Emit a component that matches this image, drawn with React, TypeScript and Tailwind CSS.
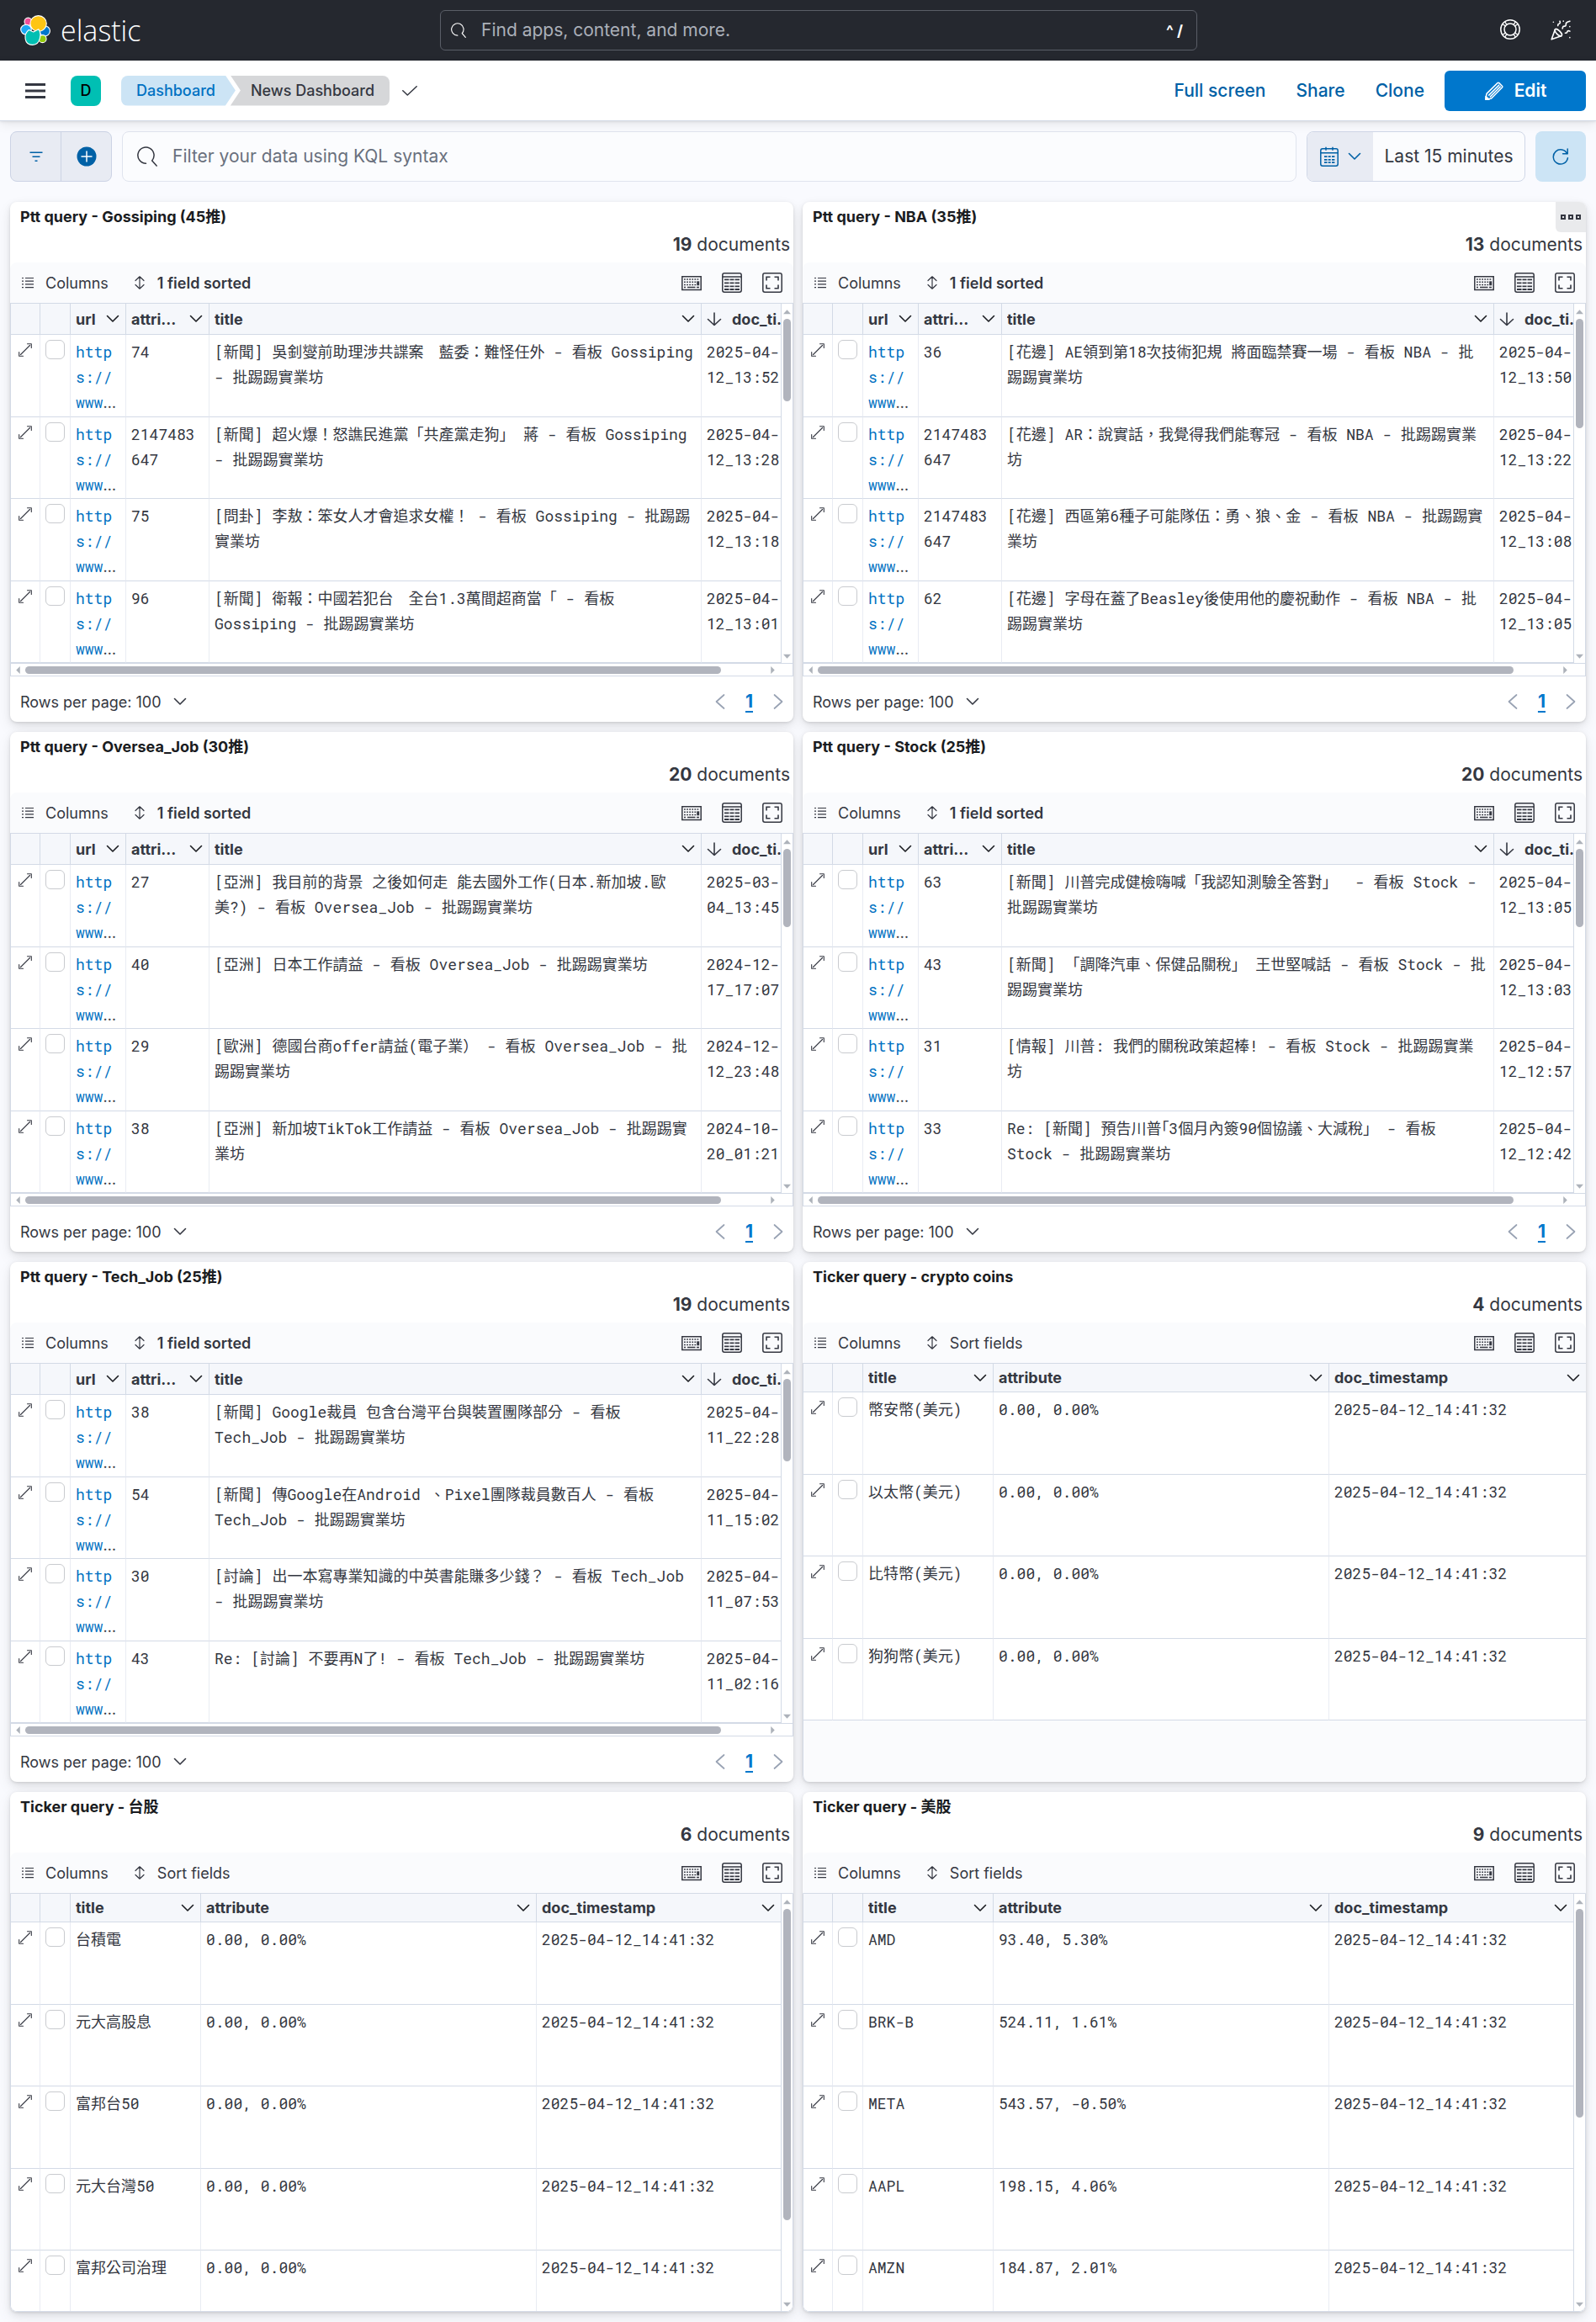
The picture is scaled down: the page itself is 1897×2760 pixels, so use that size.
import React from "react";
import { PartyPopper } from "lucide-react";

type IconProps = { className?: string };

/* ---------- icons ---------- */

const ElasticMark = () => (
  <svg viewBox="0 0 32 32" className="size-9" stroke="#fff" strokeWidth="1" aria-hidden="true">
    <ellipse cx="8.4" cy="6.9" rx="3.9" ry="4.1" fill="#f04e98" />
    <ellipse cx="6.2" cy="15.2" rx="5.6" ry="5.2" fill="#1ba9f5" />
    <ellipse cx="25.9" cy="16.7" rx="5.6" ry="5.4" fill="#0077cc" />
    <ellipse cx="23.6" cy="25" rx="4" ry="4" fill="#93c90e" />
    <ellipse cx="19.2" cy="8.9" rx="8.6" ry="8.4" fill="#fec514" />
    <path d="M9.2 15.6 L14 17.8 L19.3 14.9 C22.6 18.2 22.2 31.4 13 31.4 C4 31.4 3.2 20.2 9.2 15.6 Z" fill="#00bfb3" strokeLinejoin="round" />
  </svg>
);

const SearchIcon = ({ className }: IconProps) => (
  <svg viewBox="0 0 24 24" className={className} fill="none" stroke="currentColor" strokeWidth="1.5" strokeLinecap="round" aria-hidden="true">
    <path d="M10.5 20.2a9.6 9.6 0 1 1 7.2-3.3l5.4 6.2" />
  </svg>
);

const HelpIcon = () => (
  <svg viewBox="0 0 24 24" className="size-6" fill="none" stroke="currentColor" strokeWidth="1.5" aria-hidden="true">
    <circle cx="12" cy="12" r="11.2" />
    <circle cx="12" cy="12" r="7" />
    <path strokeWidth="1.3" d="M3.2 5.8l3.6 2.5M5.8 3.2l2.5 3.6M20.8 5.8l-3.6 2.5M18.2 3.2l-2.5 3.6M3.2 18.2l3.6-2.5M5.8 20.8l2.5-3.6M20.8 18.2l-3.6-2.5M18.2 20.8l-2.5-3.6" />
  </svg>
);

const MenuIcon = () => (
  <svg viewBox="0 0 24 18" className="h-[18px] w-6" fill="currentColor" aria-hidden="true">
    <path d="M0 0h24v3H0zM0 7.5h24v3H0zM0 15h24v3H0z" />
  </svg>
);

const CheckIcon = () => (
  <svg viewBox="0 0 18 12" className="h-3 w-[18px]" fill="none" stroke="currentColor" strokeWidth="1.5" strokeLinecap="round" strokeLinejoin="round" aria-hidden="true">
    <path d="M.8 5.8L6.3 11 17.2 .8" />
  </svg>
);

const PencilIcon = () => (
  <svg viewBox="0 0 24 24" className="size-6" fill="none" stroke="currentColor" strokeWidth="1.5" strokeLinejoin="round" aria-hidden="true">
    <path d="M16 2.6a1.3 1.3 0 0 1 1.8 0l3.6 3.6a1.3 1.3 0 0 1 0 1.8L8.6 21 1.8 22.2 3 15.4z" />
    <path d="M5.2 17.6L18 4.9M7 19.4L19.6 6.6" />
    <path d="M2 18.5v3.7h4z" fill="currentColor" />
  </svg>
);

const FilterIcon = () => (
  <svg viewBox="0 0 16 12" className="h-3 w-4" fill="currentColor" aria-hidden="true">
    <path d="M.5 .5h15v1.5H.5zM3.5 5.5h9V7h-9zM6.5 10.5h3V12h-3z" />
  </svg>
);

const PlusCircleIcon = () => (
  <svg viewBox="0 0 24 24" className="size-6" aria-hidden="true">
    <circle cx="12" cy="12" r="11.5" fill="#0061a6" />
    <path d="M12 6v12M6 12h12" stroke="#fff" strokeWidth="1.5" strokeLinecap="round" />
  </svg>
);

const CalendarIcon = () => (
  <svg viewBox="0 0 24 24" className="size-6" fill="none" stroke="currentColor" strokeWidth="1.5" aria-hidden="true">
    <rect x="1.8" y="2.8" width="20.4" height="20.4" rx="2.2" />
    <path d="M1.8 7.8h20.4M8 .8v4M16 .8v4" />
    <path d="M6 12.2h3.5M10.7 12.2h3M15 12.2h3.4M6 15.8h3.5M10.7 15.8h3M15 15.8h3.4M6 19.2h3.5M10.7 19.2h3M15 19.2h3.4" strokeWidth="1.7" />
  </svg>
);

const ChevronDown = ({ className }: IconProps) => (
  <svg viewBox="0 0 16 10" className={className} fill="none" stroke="currentColor" strokeWidth="1.6" strokeLinecap="round" strokeLinejoin="round" aria-hidden="true">
    <path d="M1.5 1.5L8 8l6.500-6.500" />
  </svg>
);

const RefreshIcon = () => (
  <svg viewBox="0 0 20 20" className="size-5" fill="none" stroke="currentColor" strokeWidth="1.5" strokeLinecap="round" strokeLinejoin="round" aria-hidden="true">
    <path d="M18.2 1v5.800h-5.600M17.800 7A8.600 8.600 0 1 0 18.400 11.800" />
  </svg>
);

const ListIcon = () => (
  <svg viewBox="0 0 18 18" className="size-[18px]" stroke="currentColor" strokeWidth="1.2" aria-hidden="true">
    <path d="M2 3.500h2M6 3.500h10M2 7.200h2M6 7.200h10M2 10.900h2M6 10.900h10M2 14.600h2M6 14.600h10" />
  </svg>
);

const SortIcon = () => (
  <svg viewBox="0 0 18 18" className="size-[18px]" fill="none" stroke="currentColor" strokeWidth="1.200" strokeLinecap="round" strokeLinejoin="round" aria-hidden="true">
    <path d="M9 2v14M4 6.500L9 1.800l5 4.700M4 11.500l5 4.700 5-4.700" />
  </svg>
);

const KeyboardIcon = () => (
  <svg viewBox="0 0 24 24" className="size-6" fill="none" stroke="currentColor" strokeWidth="1.500" aria-hidden="true">
    <path d="M.8 4.800h22.400v15.600H.8z" />
    <path d="M3 8h18.500M3 11.200h14.500M3 14.400h14.500" strokeWidth="1.500" strokeDasharray="1.800 1.300" />
    <path d="M3 17.500h2M7 17.500h9.500M18 17.500h3" strokeWidth="1.500" />
    <path d="M19.700 10.300v5" strokeWidth="3" />
  </svg>
);

const DensityIcon = () => (
  <svg viewBox="0 0 24 24" className="size-6" fill="none" stroke="currentColor" strokeWidth="1.500" aria-hidden="true">
    <rect x=".8" y=".8" width="22.400" height="22.400" rx="2.200" />
    <path d="M.8 5h22.400" />
    <path d="M3 8.300h5.500M9.500 8.300h5M15.500 8.300H21M3 12.300h5.500M9.500 12.300h5M15.500 12.300H21M3 16.300h5.500M9.500 16.300h5M15.500 16.300H21M3 20h5.500M9.500 20h5M15.500 20H21" strokeWidth="1.800" />
  </svg>
);

const FullScreenIcon = () => (
  <svg viewBox="0 0 24 24" className="size-6" fill="none" stroke="currentColor" strokeWidth="1.500" aria-hidden="true">
    <rect x=".8" y=".8" width="22.400" height="22.400" rx="2.200" />
    <path d="M5 9.500V5.200h4.500M14.500 5.200H19v4.300M19 14.500v4.300h-4.500M9.500 18.800H5v-4.300" strokeWidth="1.600" />
  </svg>
);

const ExpandIcon = () => (
  <svg viewBox="0 0 16 16" className="size-4" fill="none" stroke="currentColor" strokeWidth="1.100" strokeLinecap="round" strokeLinejoin="round" aria-hidden="true">
    <path d="M2.500 13.500l11-11M10.500.700h4.800v4.800M.7 10.500v4.800h4.800" />
  </svg>
);

const ArrowDownIcon = () => (
  <svg viewBox="0 0 18 18" className="size-[18px] shrink-0" fill="none" stroke="currentColor" strokeWidth="1.600" strokeLinecap="round" strokeLinejoin="round" aria-hidden="true">
    <path d="M9 2v14.500M1.500 9.500L9 16.500l7.500-7" />
  </svg>
);

const PageArrow = ({ dir }: { dir: "left" | "right" }) => (
  <svg viewBox="0 0 12 20" className="h-5 w-3" fill="none" stroke="currentColor" strokeWidth="1.700" strokeLinecap="round" strokeLinejoin="round" aria-hidden="true">
    <path d={dir === "left" ? "M10.500 2L1.500 10l9 8" : "M1.500 2l9 8-9 8"} />
  </svg>
);

const Triangle = ({ dir }: { dir: "up" | "down" | "left" | "right" }) => {
  const d = {
    up: "M0 7L5 1.500 10 7z",
    down: "M0 3l5 5.500L10 3z",
    left: "M7.500 0L2.500 5l5 5z",
    right: "M2.500 0l5 5-5 5z",
  }[dir];
  return (
    <svg viewBox="0 0 10 10" className="size-[9px] shrink-0" fill="#adb2ba" aria-hidden="true">
      <path d={d} />
    </svg>
  );
};

/* ---------- data ---------- */

type PttRow = [attribute: string, title: string, time: string];
type TickerRow = [title: string, attribute: string];

interface PttData {
  kind: "ptt";
  name: string;
  count: number;
  thumb: string;
  menu?: boolean;
  rows: PttRow[];
}
interface TickerData {
  kind: "ticker";
  name: string;
  count: number;
  thumb?: string;
  menu?: boolean;
  rows: TickerRow[];
}

const panels: (PttData | TickerData)[] = [
  {
    kind: "ptt",
    name: "Ptt query - Gossiping (45推)",
    count: 19,
    thumb: "h-[98px]",
    rows: [
      ["74", "[新聞] 吳釗燮前助理涉共諜案　藍委：難怪任外 - 看板 Gossiping - 批踢踢實業坊", "2025-04-12_13:52"],
      ["2147483647", "[新聞] 超火爆！怒譙民進黨「共產黨走狗」 蔣 - 看板 Gossiping - 批踢踢實業坊", "2025-04-12_13:28"],
      ["75", "[問卦] 李敖：笨女人才會追求女權！ - 看板 Gossiping - 批踢踢實業坊", "2025-04-12_13:18"],
      ["96", "[新聞] 衛報：中國若犯台　全台1.3萬間超商當「 - 看板 Gossiping - 批踢踢實業坊", "2025-04-12_13:01"],
    ],
  },
  {
    kind: "ptt",
    name: "Ptt query - NBA (35推)",
    count: 13,
    thumb: "h-[130px]",
    menu: true,
    rows: [
      ["36", "[花邊] AE領到第18次技術犯規 將面臨禁賽一場 - 看板 NBA - 批踢踢實業坊", "2025-04-12_13:50"],
      ["2147483647", "[花邊] AR：說實話，我覺得我們能奪冠 - 看板 NBA - 批踢踢實業坊", "2025-04-12_13:22"],
      ["2147483647", "[花邊] 西區第6種子可能隊伍：勇、狼、金 - 看板 NBA - 批踢踢實業坊", "2025-04-12_13:08"],
      ["62", "[花邊] 字母在蓋了Beasley後使用他的慶祝動作 - 看板 NBA - 批踢踢實業坊", "2025-04-12_13:05"],
    ],
  },
  {
    kind: "ptt",
    name: "Ptt query - Oversea_Job (30推)",
    count: 20,
    thumb: "h-[93px]",
    rows: [
      ["27", "[亞洲] 我目前的背景 之後如何走 能去國外工作(日本.新加坡.歐美?) - 看板 Oversea_Job - 批踢踢實業坊", "2025-03-04_13:45"],
      ["40", "[亞洲] 日本工作請益 - 看板 Oversea_Job - 批踢踢實業坊", "2024-12-17_17:07"],
      ["29", "[歐洲] 德國台商offer請益(電子業） - 看板 Oversea_Job - 批踢踢實業坊", "2024-12-12_23:48"],
      ["38", "[亞洲] 新加坡TikTok工作請益 - 看板 Oversea_Job - 批踢踢實業坊", "2024-10-20_01:21"],
    ],
  },
  {
    kind: "ptt",
    name: "Ptt query - Stock (25推)",
    count: 20,
    thumb: "h-[93px]",
    rows: [
      ["63", "[新聞] 川普完成健檢嗨喊「我認知測驗全答對」\u00a0 - 看板 Stock - 批踢踢實業坊", "2025-04-12_13:05"],
      ["43", "[新聞] 「調降汽車、保健品關稅」 王世堅喊話 - 看板 Stock - 批踢踢實業坊", "2025-04-12_13:03"],
      ["31", "[情報] 川普: 我們的關稅政策超棒! - 看板 Stock - 批踢踢實業坊", "2025-04-12_12:57"],
      ["33", "Re: [新聞] 預告川普｢3個月內簽90個協議、大減稅」 - 看板 Stock - 批踢踢實業坊", "2025-04-12_12:42"],
    ],
  },
  {
    kind: "ptt",
    name: "Ptt query - Tech_Job (25推)",
    count: 19,
    thumb: "h-[98px]",
    rows: [
      ["38", "[新聞] Google裁員 包含台灣平台與裝置團隊部分 - 看板 Tech_Job - 批踢踢實業坊", "2025-04-11_22:28"],
      ["54", "[新聞] 傳Google在Android 、Pixel團隊裁員數百人 - 看板 Tech_Job - 批踢踢實業坊", "2025-04-11_15:02"],
      ["30", "[討論] 出一本寫專業知識的中英書能賺多少錢？ - 看板 Tech_Job - 批踢踢實業坊", "2025-04-11_07:53"],
      ["43", "Re: [討論] 不要再N了! - 看板 Tech_Job - 批踢踢實業坊", "2025-04-11_02:16"],
    ],
  },
  {
    kind: "ticker",
    name: "Ticker query - crypto coins",
    count: 4,
    rows: [
      ["幣安幣(美元)", "0.00, 0.00%"],
      ["以太幣(美元)", "0.00, 0.00%"],
      ["比特幣(美元)", "0.00, 0.00%"],
      ["狗狗幣(美元)", "0.00, 0.00%"],
    ],
  },
  {
    kind: "ticker",
    name: "Ticker query - 台股",
    count: 6,
    thumb: "h-[370px]",
    rows: [
      ["台積電", "0.00, 0.00%"],
      ["元大高股息", "0.00, 0.00%"],
      ["富邦台50", "0.00, 0.00%"],
      ["元大台灣50", "0.00, 0.00%"],
      ["富邦公司治理", "0.00, 0.00%"],
    ],
  },
  {
    kind: "ticker",
    name: "Ticker query - 美股",
    count: 9,
    thumb: "h-[248px]",
    rows: [
      ["AMD", "93.40, 5.30%"],
      ["BRK-B", "524.11, 1.61%"],
      ["META", "543.57, -0.50%"],
      ["AAPL", "198.15, 4.06%"],
      ["AMZN", "184.87, 2.01%"],
    ],
  },
];

/* ---------- grid pieces ---------- */

const HeadCell = ({ label, sorted, last }: { label?: string; sorted?: boolean; last?: boolean }) => (
  <th
    scope="col"
    className={
      "overflow-hidden border-b border-[#d3dae6] bg-[#f5f7fb] p-0 pl-1.5 text-left text-[18px] font-bold " +
      (last ? "" : "border-r")
    }
  >
    {label && (
      <div className="flex items-center gap-2">
        {sorted && <ArrowDownIcon />}
        <span className={sorted ? "shrink-0 whitespace-nowrap pl-1" : "min-w-0 flex-1 truncate"}>{label}</span>
        {!sorted && (
          <button aria-label={`${label} actions`} className="shrink-0 pr-[7px]">
            <ChevronDown className="h-2.5 w-4 text-[#1a1c21]" />
          </button>
        )}
      </div>
    )}
  </th>
);

const Cell = ({ children, className = "" }: { children: React.ReactNode; className?: string }) => (
  <td className={"border-b border-[#d3dae6] border-r border-r-[#e9ecf3] p-0 align-top " + className}>{children}</td>
);

const Value = ({ children }: { children: React.ReactNode }) => (
  <div className="mt-[5px] px-1.5 font-['Roboto_Mono','DejaVu_Sans_Mono','Noto_Sans_CJK_TC',monospace] text-[18px] leading-[30px]">
    {children}
  </div>
);

const Controls = ({ name }: { name: string }) => (
  <>
    <Cell>
      <button aria-label={`Open ${name}`} className="ml-[9px] mt-2.5 block">
        <ExpandIcon />
      </button>
    </Cell>
    <Cell>
      <input
        type="checkbox"
        aria-label={`Select ${name}`}
        className="ml-1.5 mt-1.5 block size-[23px] appearance-none rounded-md border border-[#c9cbcf] bg-white"
      />
    </Cell>
  </>
);

const VerticalBar = ({ thumb }: { thumb: string }) => (
  <div className="flex w-[14px] shrink-0 flex-col items-center border-l border-[#d3dae6] bg-white pb-1 pt-1.5">
    <Triangle dir="up" />
    <div className="mt-[3px] flex-1">
      <div className={"w-[9px] rounded-full bg-[#b1b4bd] " + thumb} />
    </div>
    <Triangle dir="down" />
  </div>
);

const HorizontalBar = () => (
  <div className="flex h-[15px] items-center border-t border-[#d3dae6] pl-1 pr-[19px]">
    <Triangle dir="left" />
    <div className="mx-1 flex-1">
      <div className="h-[9px] w-[94%] rounded-full bg-[#b1b4bd]" />
    </div>
    <Triangle dir="right" />
  </div>
);

const PttGrid = ({ panel }: { panel: PttData }) => (
  <div className="border border-[#d3dae6] bg-white">
    <div className="flex">
      <div className="min-w-0 flex-1 overflow-hidden">
        <table className="w-full table-fixed border-separate border-spacing-0">
          <colgroup>
            <col className="w-[35px]" />
            <col className="w-9" />
            <col className="w-[66px]" />
            <col className="w-[99px]" />
            <col />
            <col className="w-[94px]" />
          </colgroup>
          <thead>
            <tr className="h-[37px]">
              <HeadCell />
              <HeadCell />
              <HeadCell label="url" />
              <HeadCell label="attribute" />
              <HeadCell label="title" />
              <HeadCell label="doc_ti…" sorted last />
            </tr>
          </thead>
          <tbody>
            {panel.rows.map(([attribute, title, time], i) => (
              <tr key={i} className="odd:h-[98px] even:h-[97px]">
                <Controls name={title} />
                <Cell className="break-all">
                  <Value>
                    <a href="#" className="text-[#0071c2]">
                      https://www
                    </a>
                    <span className="font-['Inter',sans-serif]">…</span>
                  </Value>
                </Cell>
                <Cell className="break-all">
                  <Value>{attribute}</Value>
                </Cell>
                <Cell>
                  <Value>{title}</Value>
                </Cell>
                <td className="break-all border-b border-[#d3dae6] p-0 align-top">
                  <div className="-mr-1.5">
                    <Value>{time}</Value>
                  </div>
                </td>
              </tr>
            ))}
          </tbody>
        </table>
      </div>
      <VerticalBar thumb={panel.thumb} />
    </div>
    <HorizontalBar />
  </div>
);

const TickerGrid = ({ panel }: { panel: TickerData }) => (
  <div
    className={
      "flex min-h-0 flex-1 overflow-hidden rounded-b-lg border-t border-[#d3dae6] " +
      (panel.thumb ? "border-x border-b bg-white" : "border-l bg-[#fafbfd]")
    }
  >
    <div className="min-w-0 flex-1">
      <table className="w-full table-fixed border-separate border-spacing-0 bg-white">
        <colgroup>
          <col className="w-[35px]" />
          <col className="w-9" />
          <col className="w-[155px]" />
          <col className="w-[399px]" />
          <col />
        </colgroup>
        <thead>
          <tr className="h-[34px]">
            <HeadCell />
            <HeadCell />
            <HeadCell label="title" />
            <HeadCell label="attribute" />
            <HeadCell label="doc_timestamp" last />
          </tr>
        </thead>
        <tbody>
          {panel.rows.map(([title, attribute]) => (
            <tr key={title} className="odd:h-[98px] even:h-[97px]">
              <Controls name={title} />
              <Cell>
                <Value>{title}</Value>
              </Cell>
              <Cell>
                <Value>{attribute}</Value>
              </Cell>
              <td className="border-b border-[#d3dae6] p-0 align-top">
                <Value>2025-04-12_14:41:32</Value>
              </td>
            </tr>
          ))}
        </tbody>
      </table>
    </div>
    {panel.thumb && <VerticalBar thumb={panel.thumb} />}
  </div>
);

const Panel = ({ panel }: { panel: PttData | TickerData }) => {
  const sorted = panel.kind === "ptt";
  return (
    <section className="relative flex h-[618px] min-w-0 flex-col rounded-lg bg-white shadow-[0_1px_3px_rgba(0,0,0,0.10),0_3px_8px_rgba(0,0,0,0.07),0_7px_18px_rgba(0,0,0,0.07)]">
      <h2 className="px-3 text-[18px] font-bold leading-9 text-[#1a1c21]">{panel.name}</h2>
      {panel.menu && (
        <button aria-label="Panel options" className="absolute right-0 top-0 flex size-9 items-center justify-center gap-[3px] rounded-bl-md rounded-tr-lg bg-[#e9eaec]">
          <span className="size-1.5 border-2 border-[#343741]" />
          <span className="size-1.5 border-2 border-[#343741]" />
          <span className="size-1.5 border-2 border-[#343741]" />
        </button>
      )}
      <p className="h-9 pr-1 text-right text-[21px] leading-[30px]">
        <strong className="font-bold">{panel.count}</strong> documents
      </p>
      <div className="flex h-12 items-center justify-between rounded-t-lg bg-[#fafbfd] pl-3 pr-[13px]">
        <div className="flex items-center gap-7 text-[18px]">
          <button className="flex items-center gap-3">
            <ListIcon />
            Columns
          </button>
          <button className={"flex items-center gap-3 " + (sorted ? "font-semibold" : "")}>
            <SortIcon />
            {sorted ? "1 field sorted" : "Sort fields"}
          </button>
        </div>
        <div className="flex items-center gap-6">
          <button aria-label="Keyboard shortcuts"><KeyboardIcon /></button>
          <button aria-label="Display options"><DensityIcon /></button>
          <button aria-label="Full screen grid"><FullScreenIcon /></button>
        </div>
      </div>
      {panel.kind === "ptt" ? (
        <>
          <PttGrid panel={panel} />
          <div className="flex flex-1 items-center justify-between pl-3 pr-3 pt-1.5">
            <button className="flex items-center gap-3.5 text-[18px]">
              Rows per page: 100
              <ChevronDown className="h-2.5 w-4" />
            </button>
            <div className="flex items-center gap-6 text-[#98a2b3]">
              <button aria-label="Previous page"><PageArrow dir="left" /></button>
              <a href="#" className="text-[21px] font-bold leading-6 text-[#0077cc] underline decoration-2 underline-offset-4">1</a>
              <button aria-label="Next page"><PageArrow dir="right" /></button>
            </div>
          </div>
        </>
      ) : (
        <TickerGrid panel={panel} />
      )}
    </section>
  );
};

export default function App() {
  return (
    <div className="min-h-screen bg-[#f9fafe] font-['Inter','Noto_Sans_CJK_TC',sans-serif] text-[#343741]">
      <header className="flex h-[72px] items-center justify-between bg-[#25282f] px-3 text-white">
        <a href="#" aria-label="elastic home" className="flex w-[169px] items-center gap-3 pl-3">
          <ElasticMark />
          <span className="font-['Open_Sans',sans-serif] text-[34px] font-light leading-9">elastic</span>
        </a>
        <label className="flex h-12 w-full max-w-[900px] items-center rounded-md border border-[#5a5e67] pl-3 pr-4">
          <SearchIcon className="size-[18px] shrink-0" />
          <input
            type="search"
            aria-label="Find apps, content, and more."
            placeholder="Find apps, content, and more."
            className="min-w-0 flex-1 bg-transparent pl-[18px] text-[21px] outline-none placeholder:text-[#abb0b9]"
          />
          <kbd className="font-['Inter',sans-serif] text-[18px] font-bold">^ /</kbd>
        </label>
        <div className="flex">
          <button aria-label="Help" className="flex w-[60px] justify-center"><HelpIcon /></button>
          <button aria-label="What's new" className="flex w-[60px] justify-center"><PartyPopper className="size-[26px]" strokeWidth={1.5} /></button>
        </div>
      </header>

      <div className="relative flex h-[72px] items-center justify-between border-b border-[#d3dae6] bg-white pl-[30px] pr-3 shadow-[0_1px_3px_rgba(0,0,0,0.08),0_4px_12px_rgba(0,0,0,0.08)]">
        <div className="flex items-center">
          <button aria-label="Toggle navigation"><MenuIcon /></button>
          <button className="ml-[30px] flex size-9 items-center justify-center rounded-lg bg-[#00bfb3] text-[18px] font-medium text-black">D</button>
          <nav aria-label="Breadcrumbs" className="ml-6 flex text-[18px] font-medium leading-9">
            <a href="#" className="h-9 rounded-l-lg bg-[#cce4f5] pl-[18px] pr-6 text-[#0071c2] [clip-path:polygon(0_0,calc(100%-12px)_0,100%_50%,calc(100%-12px)_100%,0_100%)]">
              Dashboard
            </a>
            <span className="-ml-1.5 h-9 rounded-r-lg bg-[#d6d7d9] pl-6 pr-[18px] [clip-path:polygon(0_0,100%_0,100%_100%,0_100%,12px_50%)]">
              News Dashboard
            </span>
          </nav>
          <button aria-label="Saved" className="ml-[15px]"><CheckIcon /></button>
        </div>
        <div className="flex items-center gap-9 text-[21px] font-medium text-[#0061a6]">
          <a href="#">Full screen</a>
          <a href="#">Share</a>
          <a href="#">Clone</a>
          <button className="-ml-3 flex h-12 w-[168px] items-center justify-center gap-3 rounded-md bg-[#0077cc] font-semibold text-white">
            <PencilIcon />
            Edit
          </button>
        </div>
      </div>

      <div className="flex gap-3 px-3 py-3">
        <div className="flex h-[60px] w-[121px] overflow-hidden rounded-lg border border-[#ccd3e5] bg-[#e8ebf3] text-[#0061a6]">
          <button aria-label="Saved queries" className="flex flex-1 items-center justify-center border-r border-[#ccd3e5]"><FilterIcon /></button>
          <button aria-label="Add filter" className="flex flex-1 items-center justify-center"><PlusCircleIcon /></button>
        </div>
        <label className="flex h-[60px] flex-1 items-center rounded-lg border border-[#e0e4ee] bg-[#fbfcfe] pl-[17px]">
          <SearchIcon className="size-6 shrink-0" />
          <input
            type="text"
            aria-label="Filter your data using KQL syntax"
            placeholder="Filter your data using KQL syntax"
            className="min-w-0 flex-1 bg-transparent pl-[18px] text-[21px] outline-none placeholder:text-[#69707d]"
          />
        </label>
        <div className="flex h-[60px] w-[260px] overflow-hidden rounded-lg border border-[#d0d7e7] bg-[#fbfcfe]">
          <button aria-label="Quick time ranges" className="flex w-[78px] items-center justify-center gap-2.5 bg-[#e8ebf3] text-[#0061a6]">
            <CalendarIcon />
            <ChevronDown className="h-2.5 w-4" />
          </button>
          <button className="flex-1 whitespace-nowrap text-[21px]">Last 15 minutes</button>
        </div>
        <button aria-label="Refresh" className="flex size-[60px] items-center justify-center rounded-lg bg-[#cce4f5] text-[#0061a6]">
          <RefreshIcon />
        </button>
      </div>

      <main className="grid grid-cols-2 gap-x-[11px] gap-y-3 px-3 pb-3 pt-3">
        {panels.map((panel) => (
          <Panel key={panel.name} panel={panel} />
        ))}
      </main>
    </div>
  );
}
